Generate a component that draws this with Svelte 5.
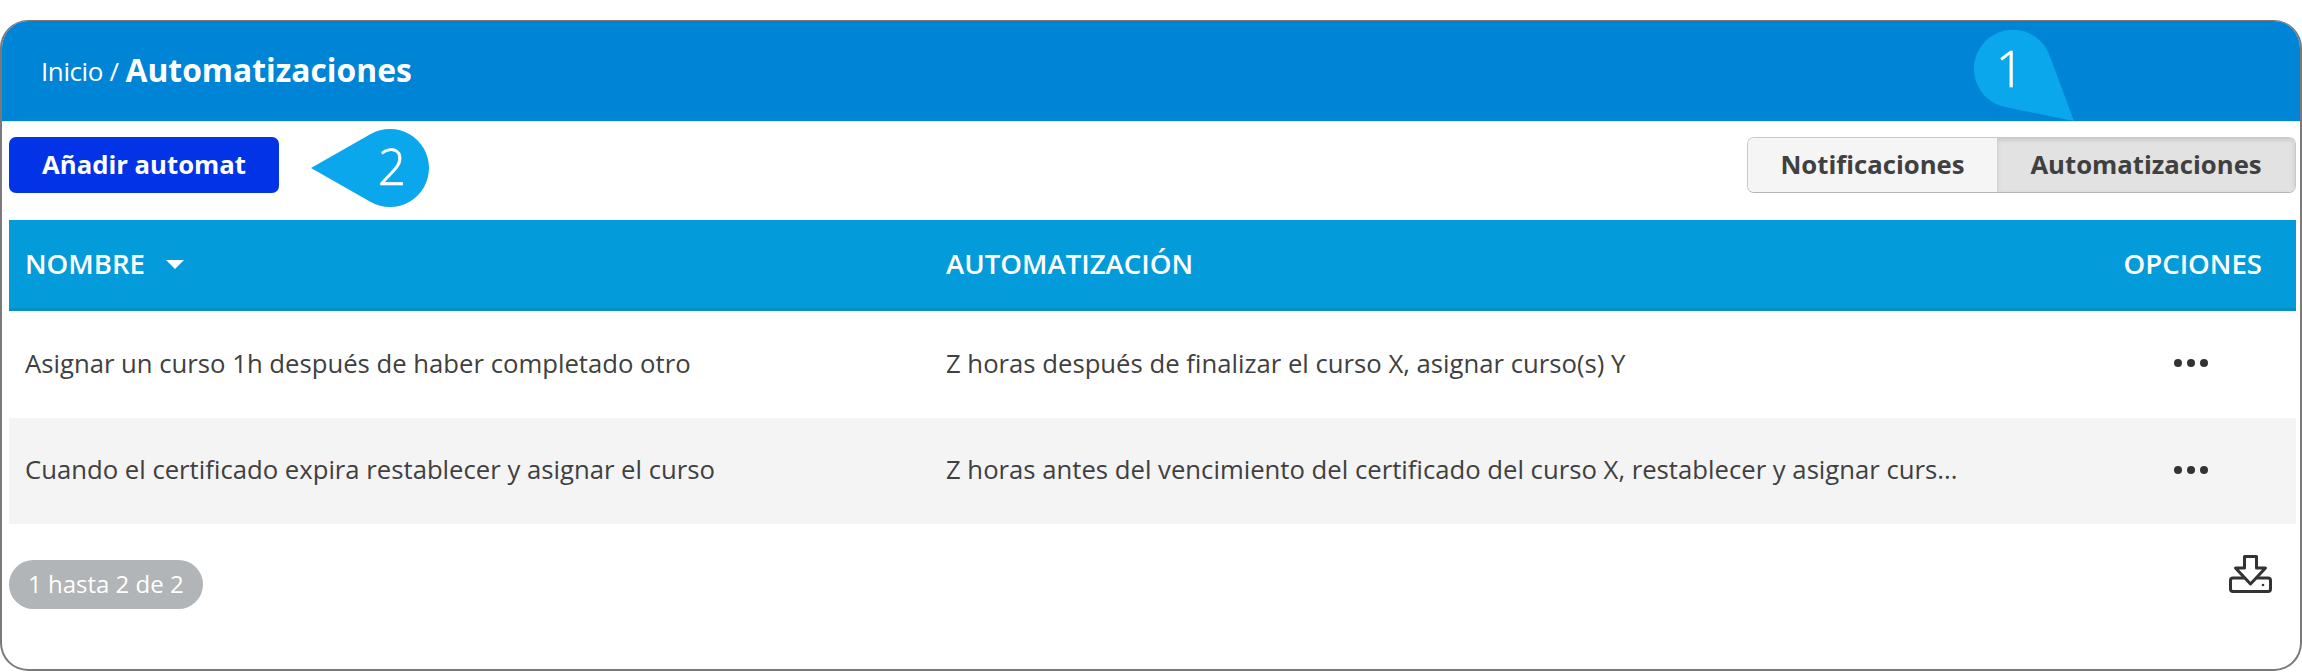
<script>
  const rows = [
    {
      name: 'Asignar un curso 1h después de haber completado otro',
      auto: 'Z horas después de finalizar el curso X, asignar curso(s) Y'
    },
    {
      name: 'Cuando el certificado expira restablecer y asignar el curso',
      auto: 'Z horas antes del vencimiento del certificado del curso X, restablecer y asignar curs...'
    }
  ];
</script>

<div class="page">
  <div class="card">
    <header class="topbar">
      <span class="crumb">Inicio / </span><strong class="title">Automatizaciones</strong>
    </header>

    <div class="toolbar">
      <button class="add-button">Añadir automat</button>
      <div class="segment">
        <button class="seg">Notificaciones</button>
        <button class="seg active">Automatizaciones</button>
      </div>
    </div>

    <div class="table">
      <div class="row head">
        <div class="col-name">NOMBRE <span class="caret"></span></div>
        <div class="col-auto">AUTOMATIZACIÓN</div>
        <div class="col-opt">OPCIONES</div>
      </div>
      {#each rows as row, i}
        <div class="row body" class:alt={i % 2 === 1}>
          <div class="col-name">{row.name}</div>
          <div class="col-auto">{row.auto}</div>
          <div class="col-opt">
            <span class="dots"><i></i><i></i><i></i></span>
          </div>
        </div>
      {/each}
    </div>

    <div class="footer">
      <span class="count">1 hasta 2 de 2</span>
      <svg class="export" width="43" height="38" viewBox="0 0 43 38" fill="none" stroke="#333" stroke-width="3" stroke-linejoin="round">
        <rect x="1.500" y="23" width="40" height="13.500" rx="2.500" />
        <path d="M15.500 1.500H27.500V13H36.500L21.500 29L6.500 13H15.500Z" fill="#fff" />
        <circle cx="34" cy="30" r="1.300" fill="#333" stroke="none" />
      </svg>
    </div>
  </div>

  <svg class="callouts" width="2302" height="672" viewBox="0 0 2302 672">
    <path d="M2074 121L2049 54A39 39 0 1 0 2005 107Z" />
    <text x="2010" y="87">1</text>
    <path d="M311 168L370.700 134.100A39 39 0 1 1 370.700 201.900Z" />
    <text x="392" y="185">2</text>
  </svg>
</div>

<style>
  :global(body) {
    margin: 0;
    background: #fff;
  }

  .page {
    position: relative;
    width: 2302px;
    height: 672px;
    padding-top: 20px;
    box-sizing: border-box;
    font-family: "Open Sans", "Liberation Sans", sans-serif;
    color: #404040;
  }

  .card {
    height: 651px;
    box-sizing: border-box;
    border: 2px solid #7a7a7a;
    border-top-width: 1px;
    border-radius: 28px;
    overflow: hidden;
    background: #fff;
  }

  .topbar {
    height: 101px;
    padding: 0 0 4px 39px;
    box-sizing: border-box;
    display: flex;
    align-items: center;
    gap: 7px;
    background: #0085d6;
    color: #fff;
    border-bottom: 1px solid #dfe8ee;
  }

  .crumb {
    font-size: 26px;
    font-weight: 400;
    letter-spacing: -0.4px;
    padding-top: 3px;
  }

  .title {
    font-size: 31.800px;
    font-weight: 700;
  }

  .toolbar {
    display: flex;
    justify-content: space-between;
    align-items: flex-start;
    height: 98px;
    padding: 15px 4px 0 7px;
    box-sizing: border-box;
  }

  .add-button {
    width: 270px;
    height: 56px;
    border: 0;
    border-radius: 7px;
    padding: 0 0 2px;
    background: #0233e6;
    color: #fff;
    font: 700 25.700px "Open Sans", sans-serif;
  }

  .segment {
    display: flex;
    height: 56px;
    box-sizing: border-box;
    border: 1px solid #c8c8c8;
    border-bottom-color: #b5b5b5;
    border-radius: 7px;
    overflow: hidden;
  }

  .seg {
    border: 0;
    background: #f5f5f5;
    color: #404040;
    font: 700 25.700px "Open Sans", sans-serif;
    width: 249px;
    padding: 0 0 2px;
  }

  .seg.active {
    width: 298px;
    background: #e2e2e2;
    box-shadow: inset 0 2px 5px rgba(0, 0, 0, 0.12);
  }

  .table {
    margin: 0 4px 0 7px;
  }

  .row {
    display: grid;
    grid-template-columns: 937px 1fr 200px;
    align-items: center;
    font-size: 25.700px;
  }

  .row > div:first-child {
    padding-left: 16px;
  }

  .head {
    height: 91px;
    padding-bottom: 2px;
    background: #049bda;
    border-bottom: 3px solid #0590c9;
    box-sizing: border-box;
    color: #fff;
    font-weight: 600;
    font-size: 27.600px;
  }

  .body {
    height: 106.500px;
    padding-bottom: 2px;
    box-sizing: border-box;
  }

  .alt {
    background: #f4f4f4;
  }

  .col-opt {
    text-align: right;
    padding-right: 34px;
  }

  .caret {
    display: inline-block;
    width: 0;
    height: 0;
    margin-left: 14px;
    vertical-align: 5px;
    border-left: 9px solid transparent;
    border-right: 9px solid transparent;
    border-top: 9px solid #fff;
  }

  .dots {
    display: flex;
    justify-content: flex-end;
    gap: 5px;
    margin-right: 54px;
  }

  .dots i {
    width: 8px;
    height: 8px;
    border-radius: 50%;
    background: #333;
  }

  .footer {
    display: flex;
    justify-content: space-between;
    align-items: flex-start;
    margin: 36px 28px 0 7px;
  }

  .count {
    height: 49px;
    line-height: 47px;
    padding: 0 19px;
    box-sizing: border-box;
    border-radius: 25px;
    background: #b1b5b7;
    color: #fff;
    font-size: 24px;
  }

  .export {
    margin-top: -5px;
  }

  .callouts {
    position: absolute;
    left: 0;
    top: 0;
    pointer-events: none;
  }

  .callouts path {
    fill: #0aa7ec;
  }

  .callouts text {
    fill: #fff;
    stroke: #fff;
    stroke-width: 0.6px;
    font-size: 49px;
    font-weight: 300;
    text-anchor: middle;
  }
</style>
